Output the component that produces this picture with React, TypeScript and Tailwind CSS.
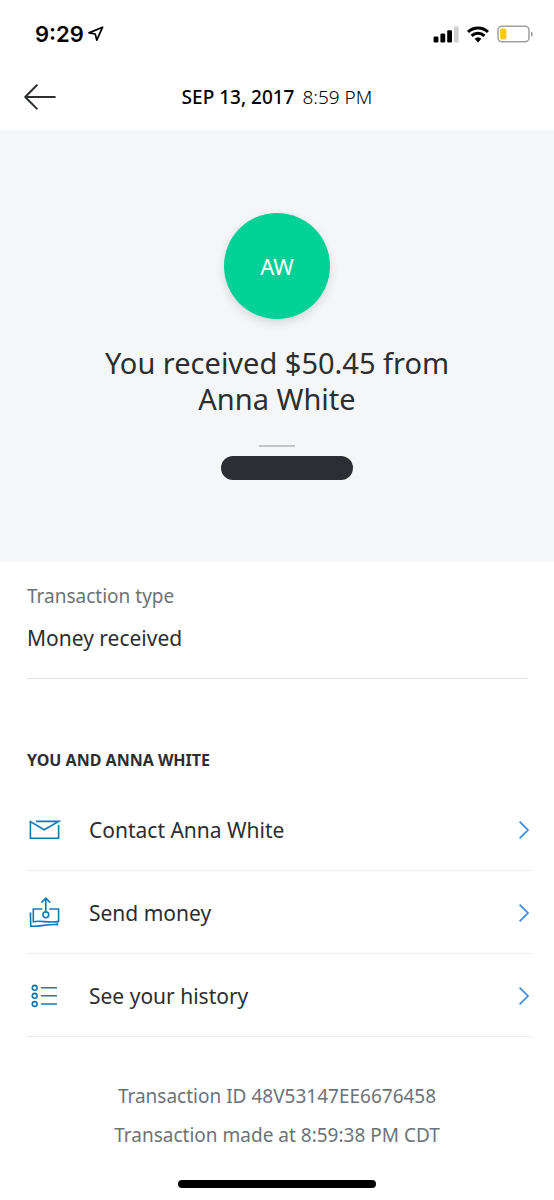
import type { ReactNode } from "react";

function LocationIcon() {
  return (
    <svg width="16" height="16" viewBox="0 0 16 16" fill="none" stroke="#000" strokeWidth="1.7" strokeLinejoin="round" aria-hidden="true">
      <path d="M14.6 1.2 1 6.9 7.2 8 8.8 14.2Z" />
    </svg>
  );
}

function SignalIcon() {
  return (
    <svg width="26" height="18" viewBox="0 0 26 18" aria-hidden="true">
      <rect x="0.6" y="11.6" width="4.8" height="5.8" rx="1.2" />
      <rect x="7.4" y="8.6" width="4.8" height="8.8" rx="1.2" />
      <rect x="14.2" y="5.2" width="4.8" height="12.2" rx="1.2" />
      <rect x="21" y="1.6" width="4.6" height="15.8" rx="1.2" fill="#d0d0d0" />
    </svg>
  );
}

function WifiIcon() {
  return (
    <svg width="22" height="18" viewBox="0 0 22 18" fill="none" stroke="#000" strokeWidth="3" aria-hidden="true">
      <path d="M1 7A14.3 14.3 0 0 1 21 7" />
      <path d="M4.6 10.8A9.2 9.2 0 0 1 17.4 10.8" />
      <path d="M11 17.4 7.6 13.8A5 5 0 0 1 14.4 13.8Z" fill="#000" stroke="none" />
    </svg>
  );
}

function BatteryIcon() {
  return (
    <svg width="37" height="18" viewBox="0 0 37 18" fill="none" aria-hidden="true">
      <rect x="1" y="1.2" width="31" height="15.6" rx="4" stroke="#a0a0a2" strokeWidth="1.5" />
      <rect x="3.2" y="3.4" width="6.2" height="11.2" rx="1.8" fill="#ffc800" />
      <path d="M34 6.4C36.2 7.2 36.2 10.8 34 11.6Z" fill="#98989a" />
    </svg>
  );
}

function BackIcon() {
  return (
    <svg width="33" height="27" viewBox="0 0 33 27" fill="none" stroke="#2c2e2f" strokeWidth="2" strokeLinecap="round" strokeLinejoin="round" aria-hidden="true">
      <path d="M30.8 13H1.2M12.8 1.2 1.2 13 12.8 24.6" />
    </svg>
  );
}

function MailIcon() {
  return (
    <svg width="34" height="34" viewBox="0 0 34 34" fill="none" stroke="#1279b5" strokeWidth="1.6" aria-hidden="true">
      <path d="M9 8.4H31.6L17.2 16.8 3.4 8.6V25.2H31.6V12" />
    </svg>
  );
}

function SendIcon() {
  return (
    <svg width="34" height="34" viewBox="0 0 34 34" fill="none" stroke="#1279b5" strokeWidth="1.6" aria-hidden="true">
      <path d="M18.8 15.6V2.4M14.4 6.6 18.8 2.2 23.2 6.6" />
      <circle cx="18.8" cy="18.8" r="2.9" />
      <path d="M15.4 13H6.3V25.8C14 24 22 27.4 31.6 25.4V13H22.2" />
      <path d="M4.4 17.4H3.4L3.8 30.2C12 31 22 27.6 30.4 28.6V26.4" />
    </svg>
  );
}

function HistoryIcon() {
  return (
    <svg width="34" height="34" viewBox="0 0 34 34" fill="none" stroke="#1279b5" strokeWidth="1.6" aria-hidden="true">
      <circle cx="7.7" cy="8.8" r="2.4" />
      <circle cx="7.7" cy="16.8" r="2.4" />
      <circle cx="7.7" cy="25" r="2.4" />
      <path d="M14 8.8H30M14 16.8H30M14 25H30" />
    </svg>
  );
}

function ChevronIcon() {
  return (
    <svg width="12" height="20" viewBox="0 0 12 20" fill="none" stroke="#3d8be0" strokeWidth="1.7" aria-hidden="true">
      <path d="M1.6 1.6 10 10 1.6 18.4" />
    </svg>
  );
}

function ActionRow({ icon, label }: { icon: ReactNode; label: string }) {
  return (
    <li className="border-b border-[#ececee]">
      <button type="button" className="flex h-[82px] w-full items-center pt-0.5 text-left text-[21px] leading-7">
        {icon}
        <span className="ml-7 grow">{label}</span>
        <span className="mr-0.5">
          <ChevronIcon />
        </span>
      </button>
    </li>
  );
}

export default function App() {
  return (
    <div className="flex min-h-screen flex-col bg-white font-['Noto_Sans',sans-serif] text-[#2c2e2f]">
      <div className="flex h-16 items-center justify-between pt-1 pr-5 pl-[35px] text-black">
        <div className="flex items-center gap-1">
          <span className="font-['Inter',sans-serif] text-[22px] leading-7 font-semibold">9:29</span>
          <LocationIcon />
        </div>
        <div className="flex items-center gap-2">
          <SignalIcon />
          <WifiIcon />
          <BatteryIcon />
        </div>
      </div>

      <header className="grid h-[66px] grid-cols-[1fr_auto_1fr] items-center px-6">
        <button type="button" aria-label="Back" className="justify-self-start">
          <BackIcon />
        </button>
        <h1 className="text-[19px] leading-6 font-light text-black">
          <span className="mr-2 font-medium">SEP 13, 2017</span>
          8:59 PM
        </h1>
      </header>

      <section className="flex flex-col items-center bg-[#f5f6f8] pt-[83px] pb-[82px]">
        <div className="flex size-[106px] items-center justify-center rounded-full bg-[#01d097] text-[22px] text-white shadow-[0_4px_10px_rgba(0,0,0,0.12)]">
          AW
        </div>
        <h2 className="mt-[26px] max-w-[400px] text-center text-[29px] leading-9">You received $50.45 from Anna White</h2>
        <div className="mt-7 h-0.5 w-9 bg-[#c2c5c8]" />
        <div className="mt-[9px] ml-5 h-6 w-[132px] rounded-full bg-[#2b2f33]" />
      </section>

      <main className="pr-[22px] pl-[27px]">
        <dl className="mr-[5px] border-b border-[#dfe1e3] pt-5 pb-[26px]">
          <dt className="text-[19px] leading-7 text-[#6c7378]">Transaction type</dt>
          <dd className="mt-3.5 text-[21px] leading-7">Money received</dd>
        </dl>

        <h3 className="mt-[69px] text-[16px] leading-6 font-bold">YOU AND ANNA WHITE</h3>
        <ul className="mt-4">
          <ActionRow icon={<MailIcon />} label="Contact Anna White" />
          <ActionRow icon={<SendIcon />} label="Send money" />
          <ActionRow icon={<HistoryIcon />} label="See your history" />
        </ul>
      </main>

      <footer className="mt-10 flex grow flex-col items-center text-[19px] leading-[39px] text-[#6c7378]">
        <p>Transaction ID 48V53147EE6676458</p>
        <p>Transaction made at 8:59:38 PM CDT</p>
        <div className="mt-auto mb-3 h-2 w-[198px] rounded-full bg-black" />
      </footer>
    </div>
  );
}
